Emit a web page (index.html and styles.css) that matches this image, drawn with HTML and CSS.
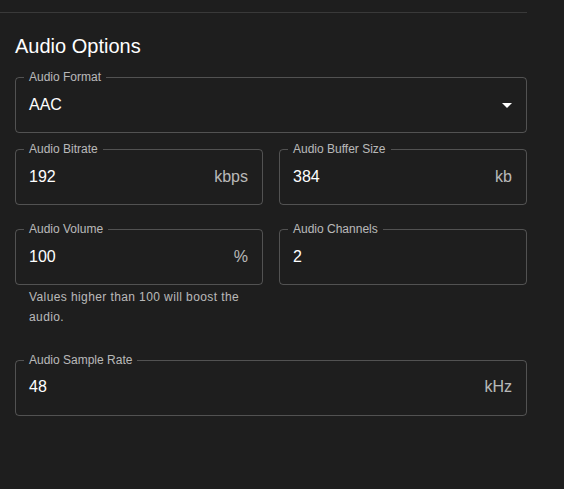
FILE: index.html
```html
<!DOCTYPE html>
<html>
<head>
<meta charset="utf-8">
<link rel="stylesheet" href="styles.css">
</head>
<body>
<div class="panel">
  <div class="divider"></div>
  <h2 class="title">Audio Options</h2>

  <div class="field field-full mt-format">
    <span class="label">Audio Format</span>
    <span class="value">AAC</span>
    <svg class="arrow" viewBox="0 0 24 24" width="24" height="24"><path d="M7 10l5 5 5-5z"/></svg>
  </div>

  <div class="row mt-row2">
    <div class="col">
      <div class="field">
        <span class="label">Audio Bitrate</span>
        <span class="value">192</span>
        <span class="unit">kbps</span>
      </div>
    </div>
    <div class="col">
      <div class="field">
        <span class="label">Audio Buffer Size</span>
        <span class="value">384</span>
        <span class="unit">kb</span>
      </div>
    </div>
  </div>

  <div class="row mt-row3">
    <div class="col">
      <div class="field">
        <span class="label">Audio Volume</span>
        <span class="value">100</span>
        <span class="unit">%</span>
      </div>
      <p class="helper">Values higher than 100 will boost the audio.</p>
    </div>
    <div class="col">
      <div class="field">
        <span class="label">Audio Channels</span>
        <span class="value">2</span>
      </div>
    </div>
  </div>

  <div class="field field-full mt-row4">
    <span class="label">Audio Sample Rate</span>
    <span class="value">48</span>
    <span class="unit">kHz</span>
  </div>
</div>
</body>
</html>
```

FILE: styles.css
```css
html, body {
  margin: 0;
  padding: 0;
  background: #1e1e1e;
}
body {
  font-family: "Liberation Sans", Arial, sans-serif;
  color: #fff;
  width: 564px;
  height: 489px;
  overflow: hidden;
}
.panel {
  width: 512px;
  padding: 12px 0 0 15px;
  position: relative;
}
.divider {
  height: 1px;
  background: rgba(255, 255, 255, 0.12);
  margin-left: -15px;
  width: 527px;
}
.title {
  margin: 17px 0 0 0;
  font-size: 20px;
  font-weight: 400;
  line-height: 32px;
}
.field {
  position: relative;
  box-sizing: border-box;
  height: 56px;
  border: 1px solid rgba(255, 255, 255, 0.23);
  border-radius: 4px;
  display: flex;
  align-items: flex-start;
  padding: 14.5px 14px 0 13px;
  font-size: 16px;
  line-height: 23px;
}
.label {
  position: absolute;
  top: -8px;
  left: 8px;
  padding: 0 5px;
  background: #1e1e1e;
  font-size: 12px;
  line-height: 15px;
  color: rgba(255, 255, 255, 0.7);
  white-space: nowrap;
}
.value {
  flex: 1;
}
.unit {
  color: rgba(255, 255, 255, 0.7);
  margin-left: 8px;
}
.arrow {
  position: absolute;
  right: 7px;
  top: 15px;
  fill: #fff;
}
.row {
  display: flex;
  gap: 16px;
}
.col {
  flex: 1;
  min-width: 0;
}
.helper {
  margin: 3px 14px 0 14px;
  font-size: 12px;
  line-height: 1.66;
  letter-spacing: 0.4px;
  color: rgba(255, 255, 255, 0.7);
}
.mt-format { margin-top: 15px; }
.mt-row2 { margin-top: 16px; }
.mt-row3 { margin-top: 24px; }
.mt-row4 { margin-top: 32px; }
```
